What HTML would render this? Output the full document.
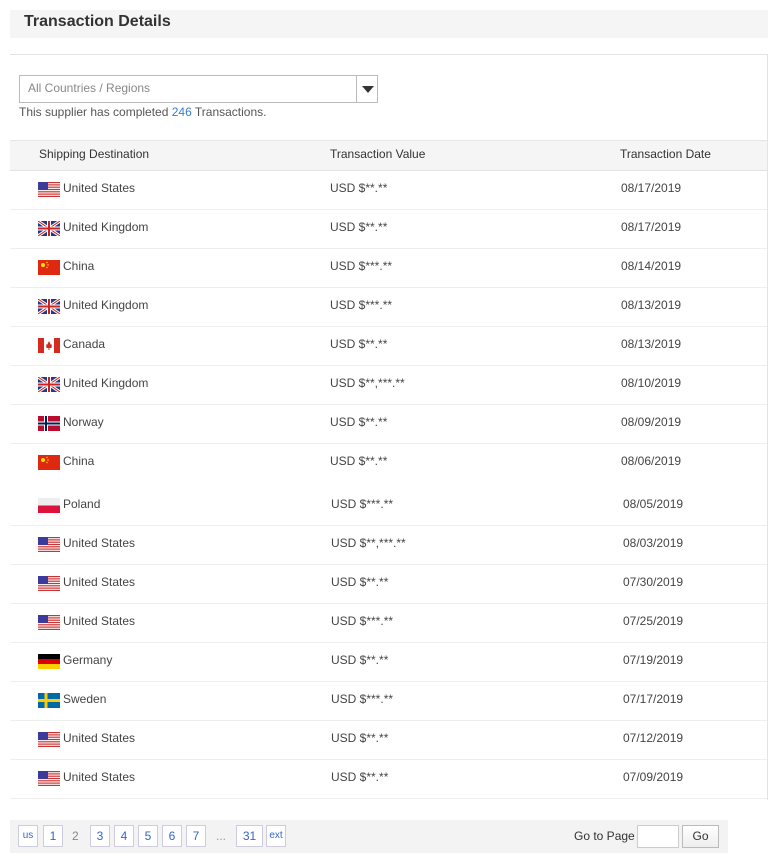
<!DOCTYPE html>
<html><head><meta charset="utf-8"><style>
*{margin:0;padding:0;box-sizing:border-box}
body{width:778px;height:864px;background:#fff;font-family:"Liberation Sans",sans-serif;font-size:12px;color:#444;position:relative;overflow:hidden}
.a{position:absolute}
.row{position:absolute;left:10px;width:757px;height:39px;border-bottom:1px solid #eee}
.row span{position:absolute;top:10px;white-space:nowrap}
.flag{position:absolute;top:11px;left:28px;width:22px;height:15px}
.pg{position:absolute;top:825px;height:22px;border:1px solid #ccd;background:#fff;color:#36c;font-size:12px;text-align:center;line-height:20px}
</style></head><body>
<div class="a" style="left:10px;top:10px;width:758px;height:28px;background:#f5f5f5"></div>
<div class="a" style="left:24px;top:13px;font-size:16px;font-weight:bold;color:#333">Transaction Details</div>
<div class="a" style="left:10px;top:54px;width:758px;height:746px;border-top:1px solid #e3e3e3;border-right:1px solid #e3e3e3"></div>
<div class="a" style="left:19px;top:75px;width:359px;height:28px;border:1px solid #bbb"></div>
<div class="a" style="left:356px;top:76px;width:1px;height:26px;background:#bbb"></div>
<div class="a" style="left:362px;top:86px;width:0;height:0;border-left:6px solid transparent;border-right:6px solid transparent;border-top:7px solid #333"></div>
<div class="a" style="left:28px;top:81px;color:#888">All Countries / Regions</div>
<div class="a" style="left:19px;top:105px;color:#555">This supplier has completed <span style="color:#3a7bc8">246</span> Transactions.</div>
<div class="a" style="left:10px;top:140px;width:757px;height:31px;background:#f5f5f5;border-top:1px solid #e5e5e5;border-bottom:1px solid #e3e3e3"></div>
<div class="a" style="left:39px;top:147px;color:#333">Shipping Destination</div>
<div class="a" style="left:330px;top:147px;color:#333">Transaction Value</div>
<div class="a" style="left:620px;top:147px;color:#333">Transaction Date</div>
<svg width="0" height="0" style="position:absolute"><defs>
<g id="us"><rect width="22" height="15" fill="#fff"/><g fill="#c33"><rect y="0" width="22" height="1.2"/><rect y="2.3" width="22" height="1.2"/><rect y="4.6" width="22" height="1.2"/><rect y="6.9" width="22" height="1.2"/><rect y="9.2" width="22" height="1.2"/><rect y="11.5" width="22" height="1.2"/><rect y="13.8" width="22" height="1.2"/></g><rect width="10" height="8" fill="#3b3b9c"/></g>
<g id="uk"><rect width="22" height="15" fill="#1f3b8c"/><path d="M0 0L22 15M22 0L0 15" stroke="#fff" stroke-width="3"/><path d="M0 0L22 15M22 0L0 15" stroke="#c22" stroke-width="1"/><path d="M11 0V15M0 7.5H22" stroke="#fff" stroke-width="4"/><path d="M11 0V15M0 7.5H22" stroke="#c22" stroke-width="2"/></g>
<g id="cn"><rect width="22" height="15" fill="#de2910"/><circle cx="5" cy="5" r="2" fill="#ffde00"/><circle cx="9" cy="2.5" r=".7" fill="#ffde00"/><circle cx="10" cy="5" r=".7" fill="#ffde00"/><circle cx="9" cy="7.5" r=".7" fill="#ffde00"/></g>
<g id="ca"><rect width="22" height="15" fill="#fff"/><rect width="6" height="15" fill="#d52b1e"/><rect x="16" width="6" height="15" fill="#d52b1e"/><path d="M11 3L13 7L14 6L13.5 10H11.5V12H10.5V10H8.5L8 6L9 7Z" fill="#d52b1e"/></g>
<g id="no"><rect width="22" height="15" fill="#ba0c2f"/><path d="M8 0V15M0 7.5H22" stroke="#fff" stroke-width="4"/><path d="M8 0V15M0 7.5H22" stroke="#00205b" stroke-width="2"/></g>
<g id="pl"><rect width="22" height="15" fill="#eee"/><rect y="7.5" width="22" height="7.5" fill="#dc143c"/></g>
<g id="de"><rect width="22" height="5" fill="#000"/><rect y="5" width="22" height="5" fill="#d00"/><rect y="10" width="22" height="5" fill="#ffce00"/></g>
<g id="se"><rect width="22" height="15" fill="#006aa7"/><path d="M8 0V15M0 7.5H22" stroke="#fecc00" stroke-width="3"/></g>
</defs></svg>

<div class="row" style="top:171px"><svg class="flag"><use href="#us"/></svg><span style="left:53px">United States</span><span style="left:320px">USD $**.**</span><span style="left:611px">08/17/2019</span></div>
<div class="row" style="top:210px"><svg class="flag"><use href="#uk"/></svg><span style="left:53px">United Kingdom</span><span style="left:320px">USD $**.**</span><span style="left:611px">08/17/2019</span></div>
<div class="row" style="top:249px"><svg class="flag"><use href="#cn"/></svg><span style="left:53px">China</span><span style="left:320px">USD $***.**</span><span style="left:611px">08/14/2019</span></div>
<div class="row" style="top:288px"><svg class="flag"><use href="#uk"/></svg><span style="left:53px">United Kingdom</span><span style="left:320px">USD $***.**</span><span style="left:611px">08/13/2019</span></div>
<div class="row" style="top:327px"><svg class="flag"><use href="#ca"/></svg><span style="left:53px">Canada</span><span style="left:320px">USD $**.**</span><span style="left:611px">08/13/2019</span></div>
<div class="row" style="top:366px"><svg class="flag"><use href="#uk"/></svg><span style="left:53px">United Kingdom</span><span style="left:320px">USD $**,***.**</span><span style="left:611px">08/10/2019</span></div>
<div class="row" style="top:405px"><svg class="flag"><use href="#no"/></svg><span style="left:53px">Norway</span><span style="left:320px">USD $**.**</span><span style="left:611px">08/09/2019</span></div>
<div class="row" style="top:444px;border:none"><svg class="flag"><use href="#cn"/></svg><span style="left:53px">China</span><span style="left:320px">USD $**.**</span><span style="left:611px">08/06/2019</span></div>
<div class="row" style="top:487px"><svg class="flag"><use href="#pl"/></svg><span style="left:53px">Poland</span><span style="left:321px">USD $***.**</span><span style="left:613px">08/05/2019</span></div>
<div class="row" style="top:526px"><svg class="flag"><use href="#us"/></svg><span style="left:53px">United States</span><span style="left:321px">USD $**,***.**</span><span style="left:613px">08/03/2019</span></div>
<div class="row" style="top:565px"><svg class="flag"><use href="#us"/></svg><span style="left:53px">United States</span><span style="left:321px">USD $**.**</span><span style="left:613px">07/30/2019</span></div>
<div class="row" style="top:604px"><svg class="flag"><use href="#us"/></svg><span style="left:53px">United States</span><span style="left:321px">USD $***.**</span><span style="left:613px">07/25/2019</span></div>
<div class="row" style="top:643px"><svg class="flag"><use href="#de"/></svg><span style="left:53px">Germany</span><span style="left:321px">USD $**.**</span><span style="left:613px">07/19/2019</span></div>
<div class="row" style="top:682px"><svg class="flag"><use href="#se"/></svg><span style="left:53px">Sweden</span><span style="left:321px">USD $***.**</span><span style="left:613px">07/17/2019</span></div>
<div class="row" style="top:721px"><svg class="flag"><use href="#us"/></svg><span style="left:53px">United States</span><span style="left:321px">USD $**.**</span><span style="left:613px">07/12/2019</span></div>
<div class="row" style="top:760px"><svg class="flag"><use href="#us"/></svg><span style="left:53px">United States</span><span style="left:321px">USD $**.**</span><span style="left:613px">07/09/2019</span></div>

<div class="a" style="left:10px;top:820px;width:718px;height:33px;background:#f3f3f3"></div>
<div class="pg" style="left:18px;width:20px;font-size:10px">us</div>
<div class="pg" style="left:43px;width:20px">1</div>
<div class="a" style="left:72px;top:829px;color:#888">2</div>
<div class="pg" style="left:90px;width:20px">3</div>
<div class="pg" style="left:114px;width:20px">4</div>
<div class="pg" style="left:138px;width:20px">5</div>
<div class="pg" style="left:162px;width:20px">6</div>
<div class="pg" style="left:186px;width:20px">7</div>
<div class="a" style="left:216px;top:829px;color:#999">...</div>
<div class="pg" style="left:236px;width:27px">31</div>
<div class="pg" style="left:266px;width:20px;font-size:10px">ext</div>
<div class="a" style="left:574px;top:829px;color:#333">Go to Page</div>
<div class="a" style="left:637px;top:825px;width:42px;height:23px;border:1px solid #ccc;background:#fff"></div>
<div class="a" style="left:682px;top:825px;width:37px;height:23px;border:1px solid #bbb;background:linear-gradient(#fff,#eee);text-align:center;line-height:21px;color:#333">Go</div>
</body></html>
